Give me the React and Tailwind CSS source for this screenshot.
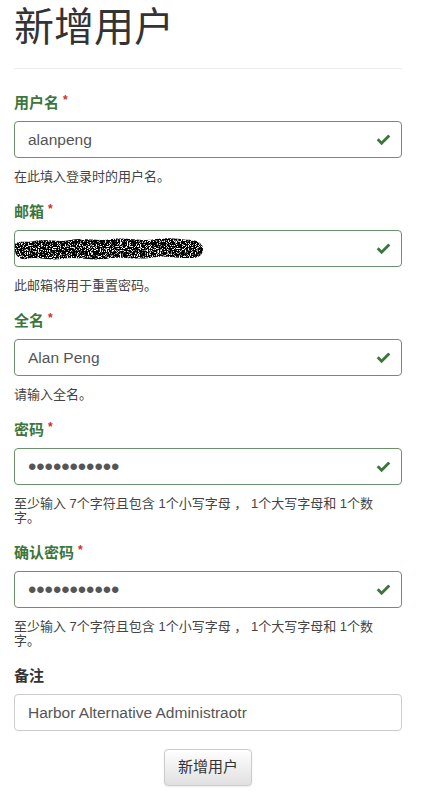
import { useState } from "react"

const CheckSvg = ({ className }) => (
  <svg viewBox="0 0 16 12" className={className} fill="currentColor">
    <path d="M0.6 6.4 L2.8 4.2 L5.9 7.3 L13.2 0 L15.4 2.2 L5.9 11.7 Z" />
  </svg>
)

// redacted email: noisy black blob
const EmailScribble = () => (
  <svg width="190" height="30" viewBox="0 0 190 30" className="absolute left-0 top-1/2 -translate-y-1/2">
    <defs>
      <filter id="noisy" x="-5%" y="-20%" width="110%" height="140%">
        <feTurbulence type="fractalNoise" baseFrequency="0.9" numOctaves="3" seed="11" result="t" />
        <feColorMatrix in="t" type="matrix" values="0 0 0 0 0  0 0 0 0 0  0 0 0 0 0  9 0 0 0 -3.2" result="dots" />
        <feComposite in="dots" in2="SourceGraphic" operator="in" />
      </filter>
    </defs>
    <path
      d="M1 10 C5 6 12 9 20 7 C32 4 44 9 56 6 C70 3 84 8 98 5 C114 3 128 8 142 5 C156 3 170 6 178 6 C186 7 189 11 189 15 C189 21 184 25 176 24 C160 24 150 21 136 24 C120 26 106 22 92 25 C76 27 62 22 48 25 C34 27 22 22 12 25 C5 26 1 21 1 16 Z"
      fill="#000"
      filter="url(#noisy)"
    />
  </svg>
)

const Field = ({ label, required, value, type = "text", help, success = true, scribble }) => {
  const [val, setVal] = useState(value)
  return (
    <div className="mb-[18px]">
      <label
        className={`block h-5 leading-5 text-[15px] font-bold mb-2 ${success ? "text-[#3c763d]" : "text-[#333]"}`}
      >
        {label}
        {required && <span className="ml-1 text-[#c9302c] text-[12px] align-top relative -top-[3px]">*</span>}
      </label>
      <div className="relative">
        <input
          type={type}
          value={scribble ? "" : val}
          onChange={e => setVal(e.target.value)}
          className={`w-full h-[37px] rounded-[4px] border bg-white pl-[13px] pr-9 text-[#555] outline-none
            ${type === "password" ? "text-[24px] tracking-[-0.1px]" : "text-[15.5px]"}
            ${success ? "border-[#6d916c]" : "border-[#ccc]"}`}
          style={{ fontFamily: "'Liberation Sans', Arial, sans-serif" }}
        />
        {scribble && <EmailScribble />}
        {success && (
          <CheckSvg className="absolute right-[11px] top-1/2 -translate-y-1/2 w-[15px] h-[11px] text-[#3c763d]" />
        )}
      </div>
      {help && <p className="mt-3 text-[13px] leading-[14px] text-[#444]">{help}</p>}
    </div>
  )
}

const pwHelp = <>至少输入 7个字符且包含 1个小写字母 ， 1个大写字母和 1个数<br />字。</>

export default function App() {
  return (
    <div
      className="min-h-[800px] bg-white pl-[14px] pr-[29px] pb-4"
      style={{ fontFamily: "'Liberation Sans', 'Noto Sans CJK SC', sans-serif" }}
    >
      <h1 className="pt-1 text-[40px] leading-[47px] font-normal text-[#333]">新增用户</h1>
      <hr className="mt-[17px] mb-[24px] border-t border-[#eee]" />

      <Field label="用户名" required value="alanpeng" help="在此填入登录时的用户名。" />
      <Field label="邮箱" required value="" scribble help="此邮箱将用于重置密码。" />
      <Field label="全名" required value="Alan Peng" help="请输入全名。" />
      <Field label="密码" required type="password" value="alanpeng123" help={pwHelp} />
      <Field label="确认密码" required type="password" value="alanpeng123" help={pwHelp} />

      <div>
        <label className="block h-5 leading-5 text-[15px] font-bold text-[#333] mb-2">备注</label>
        <input
          type="text"
          defaultValue="Harbor Alternative Administraotr"
          className="w-full h-[37px] rounded-[4px] border border-[#ccc] bg-white pl-[13px] text-[15.5px] text-[#555] outline-none"
          style={{ fontFamily: "'Liberation Sans', Arial, sans-serif" }}
        />
      </div>

      <div className="flex justify-center mt-[18px]">
        <button
          className="h-[37px] px-[13px] rounded-[4px] border border-[#ccc] bg-gradient-to-b from-white to-[#e0e0e0] text-[15px] text-[#333] shadow-[0_1px_2px_rgba(0,0,0,0.08)]"
        >
          新增用户
        </button>
      </div>
    </div>
  )
}
